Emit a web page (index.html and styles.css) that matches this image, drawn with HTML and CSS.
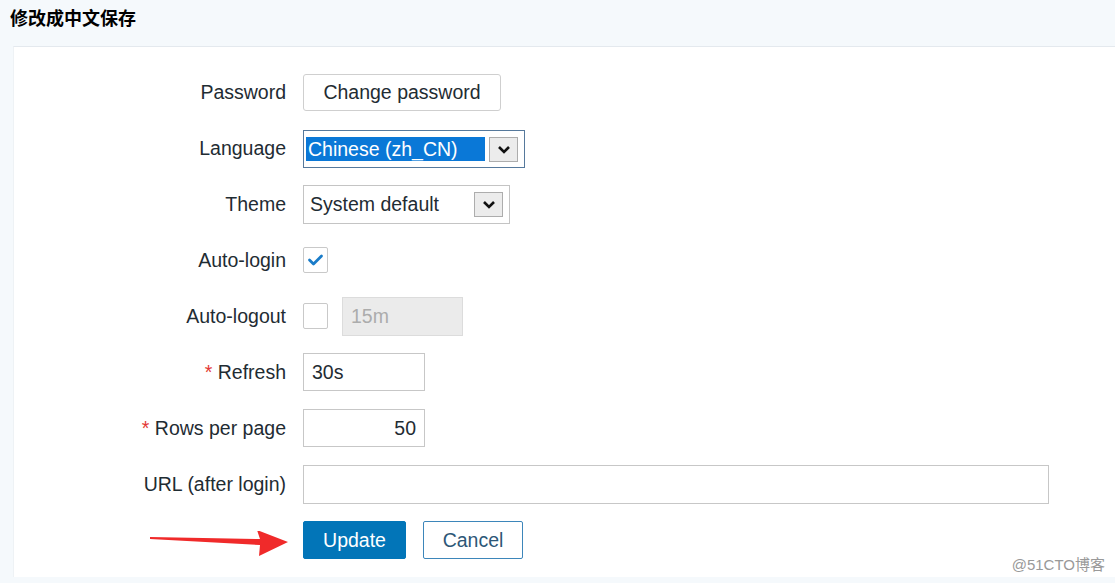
FILE: index.html
```html
<!DOCTYPE html>
<html lang="en">

<head>
    <meta charset="UTF-8">
    <meta name="viewport" content="width=device-width, initial-scale=1.0">
    <title>User profile</title>
    <link rel="stylesheet" href="styles.css">
</head>

<body>

    <h1 class="page-title">修改成中文保存</h1>

    <div class="panel">
        <div class="form-row">
            <label class="form-label">Password</label>
            <div class="form-field">
                <button class="btn-plain">Change password</button>
            </div>
        </div>

        <div class="form-row">
            <label class="form-label">Language</label>
            <div class="form-field">
                <div class="select select-lang">
                    <span class="select-value selected">Chinese (zh_CN)</span>
                    <span class="select-arrow">
                        <svg width="14" height="9" viewBox="0 0 14 9"><polyline points="2,2 7,7 12,2" fill="none" stroke="#111" stroke-width="2.6"/></svg>
                    </span>
                </div>
            </div>
        </div>

        <div class="form-row">
            <label class="form-label">Theme</label>
            <div class="form-field">
                <div class="select select-theme">
                    <span class="select-value">System default</span>
                    <span class="select-arrow">
                        <svg width="14" height="9" viewBox="0 0 14 9"><polyline points="2,2 7,7 12,2" fill="none" stroke="#111" stroke-width="2.6"/></svg>
                    </span>
                </div>
            </div>
        </div>

        <div class="form-row">
            <label class="form-label">Auto-login</label>
            <div class="form-field">
                <span class="checkbox">
                    <svg width="17" height="14" viewBox="0 0 17 14"><polyline points="2.5,7 6.5,11 14.5,3" fill="none" stroke="#1a7cc9" stroke-width="2.8" stroke-linecap="round" stroke-linejoin="round"/></svg>
                </span>
            </div>
        </div>

        <div class="form-row">
            <label class="form-label">Auto-logout</label>
            <div class="form-field">
                <span class="checkbox"></span>
                <input type="text" class="input input-short disabled" value="15m" disabled>
            </div>
        </div>

        <div class="form-row">
            <label class="form-label"><span class="required">*</span> Refresh</label>
            <div class="form-field">
                <input type="text" class="input input-short" value="30s">
            </div>
        </div>

        <div class="form-row">
            <label class="form-label"><span class="required">*</span> Rows per page</label>
            <div class="form-field">
                <input type="text" class="input input-short align-right" value="50">
            </div>
        </div>

        <div class="form-row">
            <label class="form-label">URL (after login)</label>
            <div class="form-field">
                <input type="text" class="input input-wide" value="">
            </div>
        </div>

        <div class="form-row">
            <div class="form-label"></div>
            <div class="form-field buttons">
                <button class="btn-primary">Update</button>
                <button class="btn-alt">Cancel</button>
            </div>
        </div>

        <!-- red annotation arrow -->
        <svg class="annotation-arrow" width="140" height="30" viewBox="0 0 140 30">
            <polygon points="0,6 110,8 107,-1 138,11 109,25 110,14 0,8" fill="#f02a2a"/>
        </svg>

        <div class="watermark">@51CTO博客</div>
    </div>

</body>

</html>
```

FILE: styles.css
```css
body {
    margin: 0;
    background-color: #f5f9fc;
    font-family: "Liberation Sans", Arial, "Noto Sans CJK SC", sans-serif;
    color: #1f2c33;
    height: 583px;
    overflow: hidden;
}

.page-title {
    font-family: "Noto Sans CJK SC", "Liberation Sans", sans-serif;
    font-size: 18px;
    font-weight: bold;
    color: #000;
    margin: 0;
    padding: 4px 0 0 10px;
    height: 42px;
    line-height: 26px;
    box-sizing: border-box;
}

/* White form panel */
.panel {
    position: relative;
    margin-left: 13px;
    margin-top: 4px;
    height: 531px;
    background-color: #fff;
    border-top: 1px solid #e4e9ee;
    border-left: 1px solid #eef2f5;
    padding-top: 17px;
    box-sizing: border-box;
}

.form-row {
    display: flex;
    align-items: center;
    height: 56px;
}

.form-label {
    width: 272px;
    text-align: right;
    font-size: 19.5px;
    color: #1f2c33;
    flex-shrink: 0;
}

.required {
    color: #e33734;
}

.form-field {
    display: flex;
    align-items: center;
    margin-left: 17px;
}

.btn-plain {
    width: 198px;
    height: 37px;
    background-color: #fff;
    border: 1px solid #cfcfcf;
    border-radius: 3px;
    font-family: inherit;
    font-size: 19.5px;
    color: #1f2c33;
    padding: 0;
}

/* Old style selects */
.select {
    display: flex;
    align-items: center;
    justify-content: space-between;
    box-sizing: border-box;
    border: 1px solid #c4c4c4;
    background-color: #fff;
    font-size: 19.5px;
}

.select-lang {
    width: 222px;
    height: 38px;
    margin-top: 2px;
    border-color: #56799c;
    padding: 0 6px 0 2px;
}

.select-theme {
    width: 207px;
    height: 39px;
    padding: 0 6px 0 4px;
}

.select-value {
    line-height: 24px;
    padding-left: 2px;
}

.select-value.selected {
    background-color: #0a78d7;
    color: #fff;
    width: 177px;
}

.select-arrow {
    width: 29px;
    height: 25px;
    box-sizing: border-box;
    border: 1px solid #adadad;
    background-color: #ececec;
    display: flex;
    align-items: center;
    justify-content: center;
}

.checkbox {
    width: 25px;
    height: 26px;
    box-sizing: border-box;
    border: 1px solid #c9c9c9;
    border-radius: 2px;
    background-color: #fff;
    display: flex;
    align-items: center;
    justify-content: center;
}

.input {
    box-sizing: border-box;
    border: 1px solid #c7c7c7;
    background-color: #fff;
    font-family: inherit;
    font-size: 19.5px;
    color: #1f2c33;
    padding: 0 8px;
    height: 38px;
    outline: none;
}

.input-short {
    width: 122px;
}

.input-wide {
    width: 746px;
    height: 39px;
}

.input.disabled {
    margin-left: 14px;
    width: 121px;
    height: 39px;
    background-color: #ebebeb;
    border-color: #dcdcdc;
    color: #acacac;
}

.align-right {
    text-align: right;
}

.buttons {
    gap: 17px;
}

.btn-primary {
    width: 103px;
    height: 38px;
    background-color: #0275b8;
    color: #fff;
    border: 1px solid #0275b8;
    border-radius: 2px;
    font-family: inherit;
    font-size: 19.5px;
    padding: 0;
}

.btn-alt {
    width: 100px;
    height: 38px;
    background-color: #fff;
    color: #2d5777;
    border: 1px solid #3d86ba;
    border-radius: 2px;
    font-family: inherit;
    font-size: 19.5px;
    padding: 0;
}

.annotation-arrow {
    position: absolute;
    left: 136px;
    top: 484px;
}

.watermark {
    position: absolute;
    right: 10px;
    bottom: 3px;
    font-family: "Liberation Sans", "Noto Sans CJK SC", sans-serif;
    font-size: 15px;
    color: #999;
}
```
